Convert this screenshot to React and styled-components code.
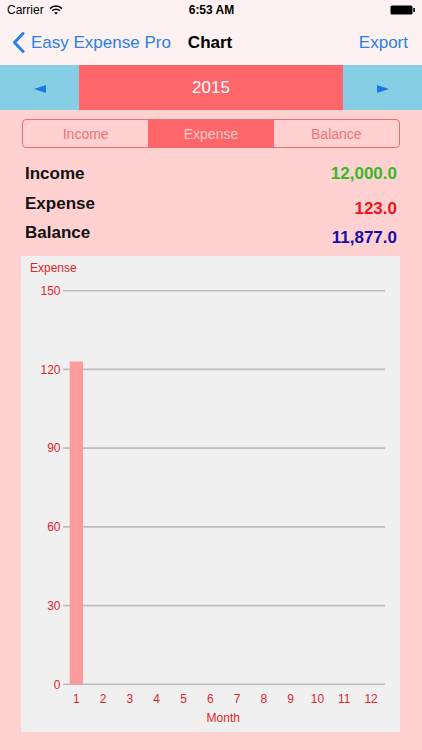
import React from "react";
import styled, { createGlobalStyle } from "styled-components";

const Global = createGlobalStyle`
  html, body { margin: 0; padding: 0; }
  body { background: #ffd1d1; font-family: "Liberation Sans", Arial, sans-serif; }
  #root { width: 422px; min-height: 750px; }
`;

const Page = styled.div`
  width: 422px;
  height: 750px;
  background: #ffd1d1;
  display: flex;
  flex-direction: column;
  overflow: hidden;
`;

const Header = styled.div`
  background: #fdf1f1;
  display: flex;
  flex-direction: column;
`;

const StatusBar = styled.div`
  height: 20px;
  display: grid;
  grid-template-columns: 1fr auto 1fr;
  align-items: center;
  padding: 0 6px 0 7px;
  font-size: 12px;
  color: #000;
`;

const StatusLeft = styled.div`
  display: flex;
  align-items: center;
  gap: 5px;
`;

const StatusTime = styled.div`
  font-weight: bold;
`;

const StatusRight = styled.div`
  display: flex;
  justify-content: flex-end;
  align-items: center;
`;

const NavBar = styled.div`
  height: 45px;
  display: flex;
  align-items: center;
  padding: 0 14px 0 12px;
  font-size: 17px;
`;

const BackButton = styled.div`
  display: flex;
  align-items: center;
  gap: 6px;
  color: #2b80e4;
`;

const NavTitle = styled.div`
  font-weight: bold;
  color: #000;
  margin-left: 17px;
`;

const NavAction = styled.div`
  margin-left: auto;
  color: #2b80e4;
`;

const YearBar = styled.div`
  height: 45px;
  display: grid;
  grid-template-columns: 79px 1fr 79px;
`;

const YearArrow = styled.div`
  background: #86cee4;
  display: flex;
  align-items: center;
  justify-content: center;
  padding-top: 3px;
`;

const YearLabel = styled.div`
  background: #ff666a;
  color: #fff;
  display: flex;
  align-items: center;
  justify-content: center;
  font-size: 17px;
`;

const Segmented = styled.div`
  margin: 9px 22px 0 22px;
  height: 29px;
  border: 1px solid #ee6e72;
  border-radius: 4px;
  display: grid;
  grid-template-columns: 1fr 1fr 1fr;
  overflow: hidden;
  box-sizing: border-box;
`;

const Segment = styled.div`
  display: flex;
  align-items: center;
  justify-content: center;
  font-size: 14px;
  color: ${(p) => (p.$active ? "#ffc9cb" : "#ee7478")};
  background: ${(p) => (p.$active ? "#ff666a" : "transparent")};
`;

const Summary = styled.div`
  padding: 16px 25px 0 25px;
  display: flex;
  flex-direction: column;
`;

const SummaryRow = styled.div`
  height: 29.5px;
  display: flex;
  justify-content: space-between;
  align-items: flex-start;
  font-size: 17px;
  font-weight: bold;
`;

const SummaryLabel = styled.div`
  color: #111;
`;

const SummaryValue = styled.div`
  color: ${(p) => p.$color};
  margin-top: ${(p) => p.$drop}px;
`;

const ChartPanel = styled.div`
  margin: 3px 22px 0 21px;
  width: 379px;
  height: 476px;
  background: #f0f0f0;
  position: relative;
`;

const ChartTitle = styled.div`
  position: absolute;
  left: 9px;
  top: 5px;
  font-size: 12px;
  color: #e0252a;
`;

const ChartSvg = styled.svg`
  display: block;
`;

const yFor = (v) => 428.3 - v * 2.624;

function Arrow({ dir }) {
  return (
    <svg width="12" height="8" viewBox="0 0 12 8">
      {dir === "left" ? (
        <path d="M0 4 L12 0 L12 8 Z" fill="#1c78e6" />
      ) : (
        <path d="M12 4 L0 0 L0 8 Z" fill="#1c78e6" />
      )}
    </svg>
  );
}

function Chart() {
  const ticks = [150, 120, 90, 60, 30, 0];
  const months = Array.from({ length: 12 }, (_, i) => i + 1);
  const data = [123, 0, 0, 0, 0, 0, 0, 0, 0, 0, 0, 0];
  return (
    <ChartPanel>
      <ChartTitle>Expense</ChartTitle>
      <ChartSvg width="379" height="476" viewBox="0 0 379 476">
        {ticks.map((t) => (
          <g key={t}>
            <line x1="42" x2="364" y1={yFor(t)} y2={yFor(t)} stroke="#bdbdbd" strokeWidth="1.6" />
            <text
              x="39.5"
              y={yFor(t) + 4.3}
              textAnchor="end"
              fontSize="12"
              fill="#e0252a"
              fontFamily="Liberation Sans, Arial, sans-serif"
            >
              {t}
            </text>
          </g>
        ))}
        {data.map((v, i) =>
          v > 0 ? (
            <rect
              key={i}
              x={48.7 + i * 26.8}
              y={yFor(v)}
              width="13.3"
              height={yFor(0) - yFor(v)}
              fill="#fd9b9c"
            />
          ) : null
        )}
        {months.map((m, i) => (
          <text
            key={m}
            x={55.3 + i * 26.8}
            y="447.3"
            textAnchor="middle"
            fontSize="12"
            fill="#e0252a"
            fontFamily="Liberation Sans, Arial, sans-serif"
          >
            {m}
          </text>
        ))}
        <text
          x="202.3"
          y="466.3"
          textAnchor="middle"
          fontSize="12"
          fill="#e0252a"
          fontFamily="Liberation Sans, Arial, sans-serif"
        >
          Month
        </text>
      </ChartSvg>
    </ChartPanel>
  );
}

export default function App() {
  return (
    <>
      <Global />
      <Page>
        <Header>
          <StatusBar>
            <StatusLeft>
              <span>Carrier</span>
              <svg width="14" height="10" viewBox="0 0 14 10">
                <path d="M1 3.6 A8.5 8.5 0 0 1 13 3.6" fill="none" stroke="#000" strokeWidth="1.5" />
                <path d="M3.2 5.8 A5.4 5.4 0 0 1 10.8 5.8" fill="none" stroke="#000" strokeWidth="1.5" />
                <path d="M7 9.6 L5.2 7.8 A2.6 2.6 0 0 1 8.8 7.8 Z" fill="#000" />
              </svg>
            </StatusLeft>
            <StatusTime>6:53 AM</StatusTime>
            <StatusRight>
              <svg width="26" height="10" viewBox="0 0 26 10">
                <rect x="0.5" y="0.5" width="22" height="9" rx="1.5" fill="#000" />
                <rect x="23.3" y="3" width="1.7" height="4" fill="#000" />
              </svg>
            </StatusRight>
          </StatusBar>
          <NavBar>
            <BackButton>
              <svg width="13" height="21" viewBox="0 0 13 21">
                <path d="M11 1.5 L2.5 10.5 L11 19.5" fill="none" stroke="#2b80e4" strokeWidth="3" strokeLinecap="round" strokeLinejoin="round" />
              </svg>
              <span>Easy Expense Pro</span>
            </BackButton>
            <NavTitle>Chart</NavTitle>
            <NavAction>Export</NavAction>
          </NavBar>
        </Header>
        <YearBar>
          <YearArrow>
            <Arrow dir="left" />
          </YearArrow>
          <YearLabel>2015</YearLabel>
          <YearArrow>
            <Arrow dir="right" />
          </YearArrow>
        </YearBar>
        <Segmented>
          <Segment>Income</Segment>
          <Segment $active>Expense</Segment>
          <Segment>Balance</Segment>
        </Segmented>
        <Summary>
          <SummaryRow>
            <SummaryLabel>Income</SummaryLabel>
            <SummaryValue $color="#35b925" $drop={0}>12,000.0</SummaryValue>
          </SummaryRow>
          <SummaryRow>
            <SummaryLabel>Expense</SummaryLabel>
            <SummaryValue $color="#ee1520" $drop={5}>123.0</SummaryValue>
          </SummaryRow>
          <SummaryRow>
            <SummaryLabel>Balance</SummaryLabel>
            <SummaryValue $color="#1a0ca8" $drop={5}>11,877.0</SummaryValue>
          </SummaryRow>
        </Summary>
        <Chart />
      </Page>
    </>
  );
}
